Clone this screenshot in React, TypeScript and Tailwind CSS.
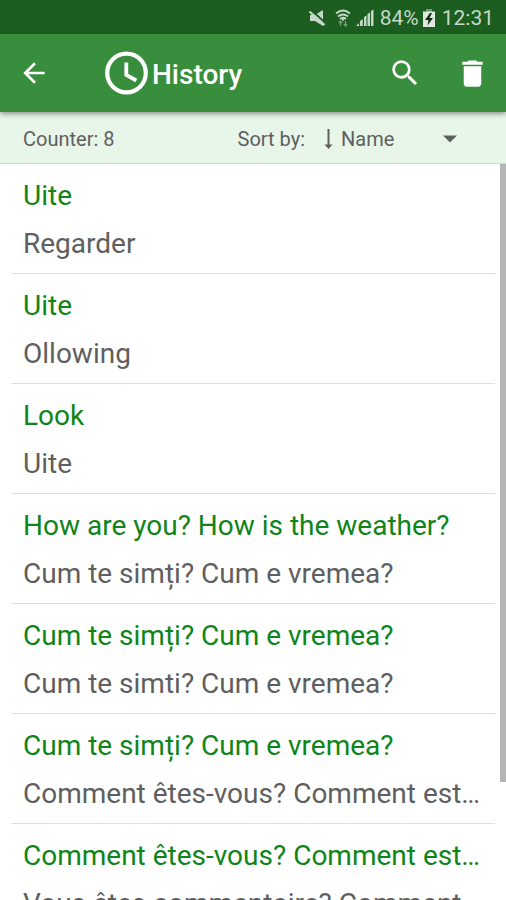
import React from "react";

type Entry = { source: string; translation: string };

const entries: Entry[] = [
  { source: "Uite", translation: "Regarder" },
  { source: "Uite", translation: "Ollowing" },
  { source: "Look", translation: "Uite" },
  { source: "How are you? How is the weather?", translation: "Cum te simți? Cum e vremea?" },
  { source: "Cum te simți? Cum e vremea?", translation: "Cum te simti? Cum e vremea?" },
  { source: "Cum te simți? Cum e vremea?", translation: "Comment êtes-vous? Comment est…" },
  { source: "Comment êtes-vous? Comment est…", translation: "Vous êtes commentaire? Comment…" },
];

function StatusBar() {
  return (
    <div className="flex h-[34px] shrink-0 items-center justify-end bg-[#1b5e20] pt-0.5 pr-3 text-[#c6d8c7]">
      <svg className="mr-[9px] h-4 w-4" viewBox="0 0 16 16" fill="currentColor" aria-hidden="true">
        <path d="M1 5h5l8-5v16l-8-5H1z" />
        <path d="M2 0l14 12.500" stroke="#1b5e20" strokeWidth="2" />
        <path d="M0.500 1.500l15 13.500" stroke="currentColor" strokeWidth="2.200" />
      </svg>
      <svg className="mr-1 h-[18px] w-[18px]" viewBox="0 0 18 18" fill="none" stroke="currentColor" strokeWidth="1.700" aria-hidden="true">
        <path d="M2 4.500q7-6 14 0M4 7.500q5-4 10 0M6 10q3-2.500 6 0" />
        <path d="M7.500 10h3L9 12.500z" fill="currentColor" stroke="none" />
        <path d="M6.500 17v-4.500M4.800 14l1.700-2 1.700 2M11.500 12v4.500M9.800 15l1.700 2 1.700-2" stroke="#6f9b72" strokeWidth="1.300" />
      </svg>
      <svg className="mr-1.5 h-[18px] w-[18px]" viewBox="0 0 18 18" fill="currentColor" aria-hidden="true">
        <path d="M0 17l3-3v3zM4 12l2.800-2v7H4zM8 8l2.500-1.500V17H8zM11.500 5L14 3.500V17h-2.500zM15 2l2.500-1.500V17H15z" />
      </svg>
      <span className="mr-1 text-[21px] leading-6">84%</span>
      <svg className="mr-[7px] h-[18px] w-3" viewBox="0 0 12 18" aria-hidden="true">
        <path d="M3 0h6v3H3z" fill="#6f9b72" />
        <path d="M0 2.500h12V18H0z" fill="#dfe9df" />
        <path d="M7 4L2 11h3.500L4.500 16.500 10 9H6.500L9 4z" fill="#102f13" />
      </svg>
      <span className="text-[21px] leading-6">12:31</span>
    </div>
  );
}

function Header() {
  return (
    <header className="relative z-10 flex h-[78px] shrink-0 items-center bg-[#388e3c] pr-4 pl-[18px] text-white shadow-[0_2px_5px_rgba(0,0,0,0.4)]">
      <button type="button" aria-label="Back" className="shrink-0">
        <svg className="h-8 w-8" viewBox="0 0 24 24" fill="currentColor">
          <path d="M20 11H7.830l5.590-5.590L12 4l-8 8 8 8 1.410-1.410L7.830 13H20v-2z" />
        </svg>
      </button>
      <svg className="ml-[55px] h-11 w-11 shrink-0" viewBox="0 0 44 44" fill="none" stroke="currentColor" aria-hidden="true">
        <circle cx="21.500" cy="22" r="19.300" strokeWidth="4.200" />
        <path d="M21.300 11.500v12.500l10 5.500" strokeWidth="3.800" />
      </svg>
      <h1 className="ml-[3px] grow pt-1 text-[28px] leading-8 font-medium">History</h1>
      <button type="button" aria-label="Search" className="shrink-0">
        <svg className="h-[34px] w-[34px]" viewBox="0 0 24 24" fill="currentColor">
          <path d="M15.500 14h-.790l-.280-.270A6.471 6.471 0 0 0 16 9.500 6.500 6.500 0 1 0 9.500 16c1.610 0 3.090-.590 4.230-1.570l.270.280v.790l5 4.990L20.490 19l-4.990-5zm-6 0C7.010 14 5 11.990 5 9.500S7.010 5 9.500 5 14 7.010 14 9.500 11.990 14 9.500 14z" />
        </svg>
      </button>
      <button type="button" aria-label="Delete all" className="ml-[33px] shrink-0">
        <svg className="h-[35px] w-[35px]" viewBox="0 0 24 24" fill="currentColor">
          <path d="M6 19c0 1.100.900 2 2 2h8c1.100 0 2-.900 2-2V7H6v12zM19 4h-3.500l-1-1h-5l-1 1H5v2h14V4z" />
        </svg>
      </button>
    </header>
  );
}

function SortBar() {
  return (
    <div className="flex h-[52px] shrink-0 items-center border-b border-[#cfd8dc] bg-[#e8f5e9] pt-0.5 pr-[49px] pl-[23px] text-[20px] leading-6 text-[#5f5f5f]">
      <span className="grow">Counter: 8</span>
      <label htmlFor="sort">Sort by:</label>
      <div className="relative ml-[18px] flex w-[134px] items-center">
        <svg className="pointer-events-none absolute left-0 h-5 w-[11px]" viewBox="0 0 11 20" fill="currentColor" aria-hidden="true">
          <path d="M4.500 0h2v16h-2z" />
          <path d="M1.500 15.500h8l-4 4.500z" />
        </svg>
        <select id="sort" className="w-full appearance-none bg-transparent pr-6 pl-[18px] leading-6">
          <option>Name</option>
          <option>Date</option>
        </select>
        <svg className="pointer-events-none absolute right-0 h-2 w-[14px]" viewBox="0 0 14 8" fill="currentColor" aria-hidden="true">
          <path d="M0 0.500h14L7 7.500z" />
        </svg>
      </div>
    </div>
  );
}

export default function App() {
  return (
    <div className="flex h-screen flex-col overflow-hidden bg-white font-['Roboto',sans-serif]">
      <StatusBar />
      <Header />
      <SortBar />
      <main className="relative min-h-0 grow overflow-hidden">
        <ul className="mx-[11px] divide-y divide-[#dde1e2] text-[28px] leading-9">
          {entries.map((entry, i) => (
            <li key={i} className="flex flex-col gap-3 px-3 pt-[14px] pb-[11px]">
              <p className="truncate text-[#0f8519]">{entry.source}</p>
              <p className="truncate text-[#5f5f5f]">{entry.translation}</p>
            </li>
          ))}
        </ul>
        <div className="absolute top-0 right-0 h-[84%] w-[6px] bg-[#b5b5b5]" />
      </main>
    </div>
  );
}
